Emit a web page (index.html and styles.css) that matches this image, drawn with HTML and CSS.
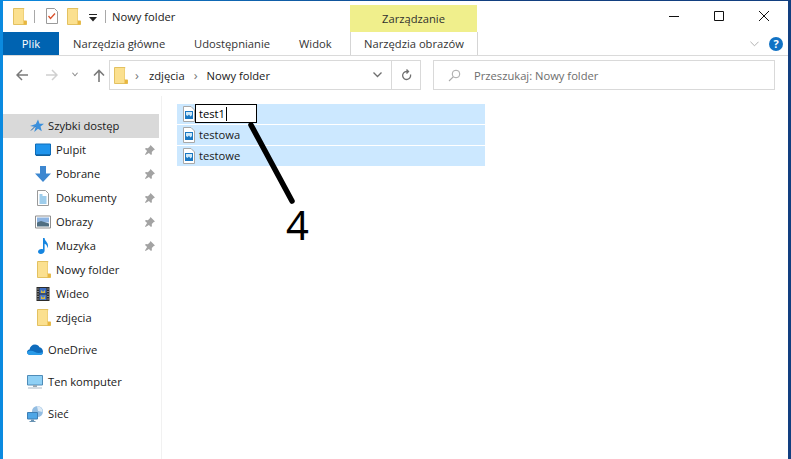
FILE: index.html
```html
<!DOCTYPE html>
<html lang="pl">
<head>
<meta charset="utf-8">
<title>Nowy folder</title>
<link rel="stylesheet" href="styles.css">
</head>
<body>
<svg class="defs" width="0" height="0" aria-hidden="true">
  <defs>
    <symbol id="folder" viewBox="0 0 14 17">
      <path d="M.5.5h10.500v12.500h2.500v3.500H.5z" fill="#fbe08f" stroke="#e3c160"/>
      <path d="M11 13V.5l2.500 3V13z" fill="#fff"/>
      <path d="M10.500 12.500h3v4h-3z" fill="#e8b63e"/>
    </symbol>
    <symbol id="pin" viewBox="0 0 12 12">
      <path d="M6.500 1l4.500 4.500-1.200.6-2 2 .1 2.100-.9.8-2.100-2.100L1.500 11l-.5-.5 2.100-3.400L1 5l.8-.9 2.100.1 2-2z" fill="#a3a3a3"/>
    </symbol>
    <symbol id="image" viewBox="0 0 12 16">
      <path d="M.5.500h7.500l3.500 3.500v11.500H.5z" fill="#fff" stroke="#a8a8a8"/>
      <path d="M2 5h8v8H2z" fill="#1a78c2"/>
      <path d="M3 6h6v3l-1.500 1.500L6 8.500 4.500 10 3 9z" fill="#cfe9f9"/>
    </symbol>
  </defs>
</svg>

<div class="window">
  <header class="titlebar">
    <svg class="qa-folder"><use href="#folder"/></svg>
    <span class="qa-sep first"></span>
    <svg class="qa-check" viewBox="0 0 12 16">
      <path d="M.5.500h8l3 3v12H.5z" fill="#fff" stroke="#9a9a9a"/>
      <path d="M2.500 8l2 2.500 4.500-5" fill="none" stroke="#d9512c" stroke-width="1.300"/>
    </svg>
    <svg class="qa-folder second"><use href="#folder"/></svg>
    <svg class="qa-drop" viewBox="0 0 8 8">
      <path d="M0 .5h8" stroke="#222" stroke-width="1"/>
      <path d="M0 3h8L4 7.500z" fill="#222"/>
    </svg>
    <span class="qa-sep"></span>
    <span class="title">Nowy folder</span>
    <div class="controls">
      <svg viewBox="0 0 10 10"><path d="M0 5.500h10" stroke="#111"/></svg>
      <svg viewBox="0 0 10 10"><path d="M.5.500h9v9h-9z" fill="none" stroke="#111"/></svg>
      <svg viewBox="0 0 10 10"><path d="M0 0l10 10M10 0L0 10" stroke="#111" stroke-width="1"/></svg>
    </div>
    <div class="context-label">Zarządzanie</div>
  </header>

  <nav class="ribbon">
    <span class="tab file">Plik</span>
    <span class="tab home">Narzędzia główne</span>
    <span class="tab share">Udostępnianie</span>
    <span class="tab view">Widok</span>
    <span class="tab tools">Narzędzia obrazów</span>
    <svg class="ribbon-chevron" viewBox="0 0 10 6"><path d="M.5.500L5 5 9.500.500" fill="none" stroke="#a8a8a8"/></svg>
    <span class="help">?</span>
  </nav>

  <div class="addressbar">
    <svg class="nav back" viewBox="0 0 12 12"><path d="M12 6H1.500M6 1L1 6l5 5" fill="none" stroke="#7a7a7a" stroke-width="1.500"/></svg>
    <svg class="nav forward" viewBox="0 0 12 12"><path d="M0 6h10.500M6 1l5 5-5 5" fill="none" stroke="#d0d0d0" stroke-width="1.500"/></svg>
    <svg class="nav recent" viewBox="0 0 7 5"><path d="M.5.500L3.500 4l3-3.500" fill="none" stroke="#8a8a8a" stroke-width="1.200"/></svg>
    <svg class="nav up" viewBox="0 0 12 13"><path d="M6 13V1.500M1 6.500l5-5 5 5" fill="none" stroke="#7a7a7a" stroke-width="1.600"/></svg>
    <div class="path">
      <svg class="path-folder"><use href="#folder"/></svg>
      <span class="crumb-sep">›</span>
      <span class="crumb">zdjęcia</span>
      <span class="crumb-sep">›</span>
      <span class="crumb">Nowy folder</span>
      <svg class="path-chevron" viewBox="0 0 9 6"><path d="M.5.500l4 4 4-4" fill="none" stroke="#6f6f6f" stroke-width="1.300"/></svg>
      <span class="refresh">
        <svg viewBox="0 0 11 12"><path d="M9.500 5.500A4 4 0 1 1 5.500 2.500H7M5.500.5L7.500 2.500l-2 2" fill="none" stroke="#6f6f6f" stroke-width="1.300"/></svg>
      </span>
    </div>
    <div class="search">
      <svg viewBox="0 0 13 13"><circle cx="8" cy="5" r="3.800" fill="none" stroke="#a8a8a8"/><path d="M5.200 7.800L1 12" stroke="#a8a8a8" stroke-width="1.100"/></svg>
      <span>Przeszukaj: Nowy folder</span>
    </div>
  </div>

  <div class="content">
    <aside class="sidebar">
      <div class="nav-item root selected">
        <svg class="nav-icon star" viewBox="0 0 14 13"><path d="M8 0l1.600 4.200H14l-3.500 2.900 1.300 4.700L8 9.200 4.200 12.500l1.400-5L0 6.500l5.800-2z" fill="#3a8fdc"/><path d="M1 11l4-4" stroke="#1f5f9f"/></svg>
        <span>Szybki dostęp</span>
      </div>
      <div class="nav-item child">
        <svg class="nav-icon" viewBox="0 0 16 13"><path d="M.5.500h15v11H.5z" fill="#1f94ec" stroke="#0e6cb8"/><path d="M1 11h14v1.500H1z" fill="#0e5f9e"/></svg>
        <span>Pulpit</span><svg class="pin"><use href="#pin"/></svg>
      </div>
      <div class="nav-item child">
        <svg class="nav-icon" viewBox="0 0 16 16"><path d="M5 0h6v7.500h5L8 16 0 7.500h5z" fill="#3d87d0"/></svg>
        <span>Pobrane</span><svg class="pin"><use href="#pin"/></svg>
      </div>
      <div class="nav-item child">
        <svg class="nav-icon" viewBox="0 0 16 16"><path d="M2.500.500h8l3 3v12h-11z" fill="#fff" stroke="#9a9a9a"/><path d="M4.500 5h3M4.500 7h7M4.500 9h7M4.500 11h7M4.500 13h7" stroke="#3f9bd8"/></svg>
        <span>Dokumenty</span><svg class="pin"><use href="#pin"/></svg>
      </div>
      <div class="nav-item child">
        <svg class="nav-icon" viewBox="0 0 16 13"><path d="M.5.500h15v12H.5z" fill="#fff" stroke="#8f8f8f"/><path d="M2 2h12v5H2z" fill="#8db4e2"/><path d="M2 7l4-1.500L14 8v3H2z" fill="#4f6e82"/></svg>
        <span>Obrazy</span><svg class="pin"><use href="#pin"/></svg>
      </div>
      <div class="nav-item child">
        <svg class="nav-icon" viewBox="0 0 16 16"><path d="M8 0h1.600c0 3 3.400 4 3.400 7.500 0 1-.3 2-.8 2.600.2-2.600-1.300-3.900-2.600-4.300v7C9.600 14.800 7.800 16 5.800 16 4 16 3 15 3 13.800c0-1.500 1.600-2.800 3.400-2.800.6 0 1.200.1 1.600.3z" fill="#1585e0"/></svg>
        <span>Muzyka</span><svg class="pin"><use href="#pin"/></svg>
      </div>
      <div class="nav-item child">
        <svg class="nav-icon folder-icon"><use href="#folder"/></svg>
        <span>Nowy folder</span>
      </div>
      <div class="nav-item child">
        <svg class="nav-icon" viewBox="0 0 16 16"><path d="M1.500 1h13v14h-13z" fill="#2b2b2b"/><path d="M4.500 2h7v5.500h-7z" fill="#3f6fc4"/><path d="M4.500 8.500h7V14h-7z" fill="#4a7ac8"/><path d="M6 4l2 2 2-2v3H6zM6 10l2 2 2-2v3H6z" fill="#d8b840"/><path d="M2.500 2.500h1v1h-1zM2.500 5h1v1h-1zM2.500 7.500h1v1h-1zM2.500 10h1v1h-1zM2.500 12.500h1v1h-1zM12.500 2.500h1v1h-1zM12.500 5h1v1h-1zM12.500 7.500h1v1h-1zM12.500 10h1v1h-1zM12.500 12.500h1v1h-1z" fill="#ddd"/></svg>
        <span>Wideo</span>
      </div>
      <div class="nav-item child">
        <svg class="nav-icon folder-icon"><use href="#folder"/></svg>
        <span>zdjęcia</span>
      </div>
      <div class="nav-item root group first-group">
        <svg class="nav-icon" viewBox="0 0 16 11"><path d="M3.500 10.500C1.500 10.500 0 9.300 0 7.700 0 6.300 1 5.200 2.500 5 3 2 5.200 0 8 0c2 0 3.700 1 4.500 2.800 2 .2 3.500 2.500 3.500 4.700 0 1.700-1.300 3-3 3z" fill="#0f6cbd"/><path d="M3.500 10.500C1.500 10.500 0 9.300 0 7.700 1.500 6 5 5.500 8 7.500c2 1.200 5 1.500 8 0 0 1.700-1.300 3-3 3z" fill="#2a9be8"/></svg>
        <span>OneDrive</span>
      </div>
      <div class="nav-item root group">
        <svg class="nav-icon" viewBox="0 0 16 14"><path d="M.5.500h15v9.500H.5z" fill="#8fd0f5" stroke="#4f8cb8"/><path d="M6 10h4v2H6z" fill="#9aa9b4"/><path d="M1 12.500h14v1H1z" fill="#a9b7c2"/></svg>
        <span>Ten komputer</span>
      </div>
      <div class="nav-item root group">
        <svg class="nav-icon" viewBox="0 0 16 16"><circle cx="10.500" cy="5.500" r="5.500" fill="#93bde2"/><path d="M10 0a5.500 5.500 0 0 1 5.500 6L11 5z" fill="#dbe9f5"/><path d="M.5 6.500h10v6.500H.5z" fill="#4ea6e6" stroke="#3d7fb5"/><path d="M4 13.500h3v1.500H4zM2.500 15h6v1h-6z" fill="#6a93b3"/></svg>
        <span>Sieć</span>
      </div>
    </aside>

    <main class="files">
      <div class="file-row">
        <svg class="file-icon"><use href="#image"/></svg>
        <span class="rename">test1<i class="caret"></i></span>
      </div>
      <div class="file-row">
        <svg class="file-icon"><use href="#image"/></svg>
        <span class="file-name">testowa</span>
      </div>
      <div class="file-row">
        <svg class="file-icon"><use href="#image"/></svg>
        <span class="file-name">testowe</span>
      </div>
    </main>
  </div>

  <svg class="callout-line" viewBox="0 0 50 84"><path d="M4 3l41 76" stroke="#000" stroke-width="5.500" stroke-linecap="round"/></svg>
  <span class="callout-number">4</span>
</div>
</body>
</html>
```
FILE: styles.css
```css
* { box-sizing: border-box; }
html, body { margin: 0; height: 100%; }
body {
  font-family: "Open Sans", "Noto Sans", sans-serif;
  font-size: 11.2px;
  color: #1a1a1a;
  background: linear-gradient(90deg, #0b8ae0, #123f80 60%);
  overflow: hidden;
}
.defs { position: absolute; }
.window {
  position: relative;
  width: 788px;
  height: 459px;
  margin-top: 1px;
  background: #fff;
  border-left: 3px solid #0b8ae0;
  display: flex;
  flex-direction: column;
}

/* title bar */
.titlebar {
  position: relative;
  height: 31px;
  flex: none;
  display: flex;
  align-items: center;
  padding-bottom: 1px;
}
.qa-folder { width: 14px; height: 17px; margin-left: 10px; flex: none; }
.qa-folder.second { margin-left: 9px; }
.qa-sep { width: 1px; height: 13px; background: #a8a8a8; margin-left: 8px; flex: none; }
.qa-sep.first { margin-left: 7px; }
.qa-check { width: 12px; height: 16px; margin-left: 11px; flex: none; }
.qa-drop { width: 8px; height: 8px; margin-left: 8px; margin-top: 3px; flex: none; }
.title { margin-left: 6px; }
.controls {
  margin-left: auto;
  margin-right: 19px;
  display: flex;
  gap: 35px;
}
.controls svg { width: 10px; height: 10px; display: block; }
.context-label {
  position: absolute;
  left: 347px;
  top: 4px;
  width: 127px;
  height: 27px;
  background: #f0ef8c;
  display: flex;
  align-items: center;
  justify-content: center;
  color: #2f2f2f;
}

/* ribbon */
.ribbon {
  height: 24px;
  flex: none;
  display: flex;
  align-items: center;
  border-bottom: 1px solid #dadada;
  color: #333;
}
.tab { height: 23px; display: flex; align-items: center; white-space: nowrap; }
.file {
  width: 56px;
  justify-content: center;
  background: #0063b1;
  color: #fff;
}
.home { margin-left: 14px; width: 121px; }
.share { width: 105px; }
.view { width: 51px; }
.tools {
  width: 128px;
  justify-content: center;
  border-left: 1px solid #d5d5d5;
  border-right: 1px solid #d5d5d5;
}
.ribbon-chevron { width: 9px; height: 6px; margin-left: 272px; flex: none; }
.help {
  width: 14px;
  height: 14px;
  margin-left: 10px;
  border-radius: 50%;
  background: #1172c4;
  color: #fff;
  font-size: 11px;
  font-weight: 700;
  line-height: 14px;
  text-align: center;
  flex: none;
}

/* address bar */
.addressbar {
  height: 40px;
  flex: none;
  display: flex;
  align-items: center;
  padding-bottom: 2px;
}
.nav { flex: none; display: block; }
.back { width: 12px; height: 12px; margin-left: 13px; }
.forward { width: 12px; height: 12px; margin-left: 18px; }
.recent { width: 6px; height: 5px; margin-left: 14px; margin-bottom: 2px; }
.up { width: 12px; height: 13px; margin-left: 15px; }
.path {
  width: 312px;
  height: 30px;
  margin-left: 4px;
  border: 1px solid #d9d9d9;
  display: flex;
  align-items: center;
  flex: none;
  color: #1a1a1a;
}
.path-folder { width: 14px; height: 17px; margin-left: 4px; flex: none; }
.crumb-sep { width: 10px; margin-left: 4px; margin-right: 7px; color: #777; text-align: center; font-size: 13px; line-height: 13px; }
.crumb + .crumb-sep { margin-left: 6px; margin-right: 6px; }
.path-chevron { width: 9px; height: 6px; margin-left: auto; margin-right: 9px; flex: none; }
.refresh {
  width: 29px;
  height: 100%;
  border-left: 1px solid #d9d9d9;
  display: flex;
  align-items: center;
  justify-content: center;
  flex: none;
}
.refresh svg { width: 11px; height: 12px; }
.search {
  width: 342px;
  height: 30px;
  margin-left: 12px;
  border: 1px solid #d9d9d9;
  display: flex;
  align-items: center;
  color: #6d6d6d;
  flex: none;
}
.search svg { width: 13px; height: 13px; margin-left: 14px; margin-right: 13px; flex: none; }

/* content */
.content { flex: 1; display: flex; min-height: 0; }
.sidebar {
  width: 159px;
  flex: none;
  border-right: 1px solid #f1f1f1;
  padding-top: 18px;
  color: #1a1a1a;
}
.nav-item {
  height: 24px;
  width: 156px;
  display: flex;
  align-items: center;
  padding-bottom: 1px;
}
.selected { background: #d9d9d9; }
.root .nav-icon { margin-left: 24px; margin-right: 5px; width: 16px; height: 16px; flex: none; }
.root .star { margin-left: 27px; width: 14px; margin-right: 4px; }
.child .nav-icon { margin-left: 32px; margin-right: 5px; width: 16px; height: 16px; flex: none; }
.child .folder-icon { width: 14px; height: 17px; margin-left: 34px; margin-right: 5px; }
.group { height: 32px; }
.first-group { margin-top: 4px; }
.pin { width: 12px; height: 12px; margin-left: auto; margin-right: 3px; flex: none; }

/* files */
.files {
  flex: 1;
  padding-top: 8px;
  padding-left: 15px;
  display: flex;
  flex-direction: column;
  gap: 1px;
}
.file-row {
  width: 308px;
  height: 20px;
  background: #cce8ff;
  display: flex;
  align-items: center;
  padding-left: 6px;
  padding-bottom: 1px;
  flex: none;
}
.file-icon { width: 12px; height: 16px; flex: none; }
.file-name { padding-left: 4px; }
.rename {
  width: 62px;
  height: 19px;
  margin-top: 0;
  border: 1px solid #000;
  background: #fff;
  display: flex;
  align-items: center;
  padding-left: 3px;
  color: #000;
}
.caret { width: 1px; height: 14px; background: #000; margin-left: 1px; }

/* callout drawn over the screenshot */
.callout-line {
  position: absolute;
  left: 244px;
  top: 121px;
  width: 50px;
  height: 84px;
}
.callout-number {
  position: absolute;
  left: 283px;
  top: 196px;
  font-family: "Noto Sans", sans-serif;
  font-size: 40px;
  line-height: 56px;
  color: #000;
}
```
